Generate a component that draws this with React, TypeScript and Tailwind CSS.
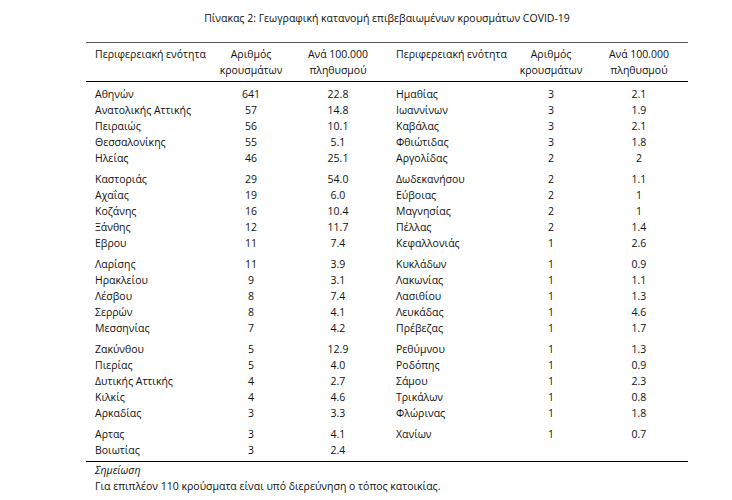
import React from "react";

type Row = [string, string, string, string, string, string];

const groups: Row[][] = [
  [
    ["Αθηνών", "641", "22.8", "Ημαθίας", "3", "2.1"],
    ["Ανατολικής Αττικής", "57", "14.8", "Ιωαννίνων", "3", "1.9"],
    ["Πειραιώς", "56", "10.1", "Καβάλας", "3", "2.1"],
    ["Θεσσαλονίκης", "55", "5.1", "Φθιώτιδας", "3", "1.8"],
    ["Ηλείας", "46", "25.1", "Αργολίδας", "2", "2"],
  ],
  [
    ["Καστοριάς", "29", "54.0", "Δωδεκανήσου", "2", "1.1"],
    ["Αχαΐας", "19", "6.0", "Εύβοιας", "2", "1"],
    ["Κοζάνης", "16", "10.4", "Μαγνησίας", "2", "1"],
    ["Ξάνθης", "12", "11.7", "Πέλλας", "2", "1.4"],
    ["Εβρου", "11", "7.4", "Κεφαλλονιάς", "1", "2.6"],
  ],
  [
    ["Λαρίσης", "11", "3.9", "Κυκλάδων", "1", "0.9"],
    ["Ηρακλείου", "9", "3.1", "Λακωνίας", "1", "1.1"],
    ["Λέσβου", "8", "7.4", "Λασιθίου", "1", "1.3"],
    ["Σερρών", "8", "4.1", "Λευκάδας", "1", "4.6"],
    ["Μεσσηνίας", "7", "4.2", "Πρέβεζας", "1", "1.7"],
  ],
  [
    ["Ζακύνθου", "5", "12.9", "Ρεθύμνου", "1", "1.3"],
    ["Πιερίας", "5", "4.0", "Ροδόπης", "1", "0.9"],
    ["Δυτικής Αττικής", "4", "2.7", "Σάμου", "1", "2.3"],
    ["Κιλκίς", "4", "4.6", "Τρικάλων", "1", "0.8"],
    ["Αρκαδίας", "3", "3.3", "Φλώρινας", "1", "1.8"],
  ],
  [
    ["Αρτας", "3", "4.1", "Χανίων", "1", "0.7"],
    ["Βοιωτίας", "3", "2.4", "", "", ""],
  ],
];

const cols = "grid grid-cols-[126px_78px_96px_126px_78px_98px]";

export default function App() {
  return (
    <div
      className="w-[732px] h-[500px] bg-white text-[#111] font-medium text-[10.5px] leading-[16px]"
      style={{ fontFamily: '"Open Sans", "Noto Sans", sans-serif' }}
    >
      <div className="ml-[86px] w-[602px]">
        <div className="pt-[10px] text-center">
          Πίνακας 2: Γεωγραφική κατανομή επιβεβαιωμένων κρουσμάτων COVID-19
        </div>
        <div className="mt-[16px] border-t-[1.5px] border-[#555]">
          <div className={`${cols} pt-[3px] pb-[3px] border-b-[1.5px] border-black`}>
            <div className="pl-[9px]">Περιφερειακή ενότητα</div>
            <div className="text-center">
              Αριθμός
              <br />
              κρουσμάτων
            </div>
            <div className="text-center">
              Ανά 100.000
              <br />
              πληθυσμού
            </div>
            <div className="pl-[10px]">Περιφερειακή ενότητα</div>
            <div className="text-center">
              Αριθμός
              <br />
              κρουσμάτων
            </div>
            <div className="text-center">
              Ανά 100.000
              <br />
              πληθυσμού
            </div>
          </div>
          <div className="pt-[4px] pb-[3px] border-b-[1.5px] border-black">
            {groups.map((g, gi) => (
              <div key={gi} className={gi > 0 ? "mt-[5px]" : ""}>
                {g.map((r, ri) => (
                  <div key={ri} className={`${cols} h-[16px]`}>
                    <div className="pl-[9px]">{r[0]}</div>
                    <div className="text-center">{r[1]}</div>
                    <div className="text-center">{r[2]}</div>
                    <div className="pl-[10px]">{r[3]}</div>
                    <div className="text-center">{r[4]}</div>
                    <div className="text-center">{r[5]}</div>
                  </div>
                ))}
              </div>
            ))}
          </div>
          <div className="pl-[9px]">
            <div className="italic">Σημείωση</div>
            <div>Για επιπλέον 110 κρούσματα είναι υπό διερεύνηση ο τόπος κατοικίας.</div>
          </div>
        </div>
      </div>
    </div>
  );
}
